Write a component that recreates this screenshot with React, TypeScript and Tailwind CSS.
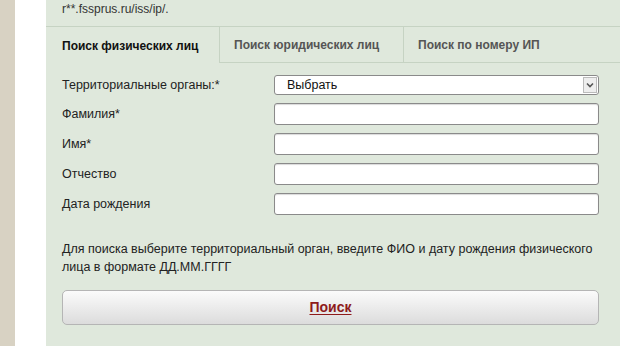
import React from "react";

function Input() {
  return (
    <div className="h-[22px] w-[325px] rounded-[3px] border border-[#8a8a8a] bg-white shadow-[inset_0_1px_1px_rgba(0,0,0,0.15)]" />
  );
}

export default function App() {
  const rows = ["Фамилия*", "Имя*", "Отчество", "Дата рождения"];
  return (
    <div className="flex h-[346px] w-[640px] overflow-hidden bg-white font-['Liberation_Sans',Arial,sans-serif] text-[#222]">
      <div className="w-[15px] shrink-0 bg-[#d8d2c3]" />
      <div className="w-[31px] shrink-0" />
      <div className="flex w-[574px] shrink-0 flex-col bg-[#dfe8dc]">
        <div className="h-[26px] pl-[16px] pt-[2px] text-[12px] leading-[14px] text-[#333]">r**.fssprus.ru/iss/ip/.</div>
        <div className="flex h-[37px] border-t border-[#c6d3c3] text-[12px] font-bold">
          <div className="flex w-[173px] items-center pl-[16px] pt-[1px] text-[#111]">Поиск физических лиц</div>
          <div className="flex w-[184px] items-center border-b border-l border-[#c6d3c3] pl-[14px] pt-[1px] text-[#555]">Поиск юридических лиц</div>
          <div className="flex flex-1 items-center border-b border-l border-[#c6d3c3] pl-[14px] pt-[1px] text-[#555]">Поиск по номеру ИП</div>
        </div>
        <div className="flex flex-col gap-[8px] pl-[16px] pt-[12px] text-[12.5px]">
          <div className="flex h-[20px] items-center">
            <div className="w-[212px]">Территориальные органы:*</div>
            <div className="flex h-[20px] w-[325px] items-center rounded-[3px] border border-[#8a8a8a] bg-white">
              <div className="flex-1 pl-[12px] text-[12.5px] text-[#111]">Выбрать</div>
              <div className="mr-[1px] flex h-[16px] w-[14px] items-center justify-center border border-[#bbb] bg-[#eee]">
                <svg width="8" height="6" viewBox="0 0 8 6">
                  <path d="M1 1.5 L4 4.5 L7 1.5" fill="none" stroke="#555" strokeWidth="1.6" />
                </svg>
              </div>
            </div>
          </div>
          {rows.map((r) => (
            <div key={r} className="flex h-[22px] items-center">
              <div className="w-[212px]">{r}</div>
              <Input />
            </div>
          ))}
        </div>
        <div className="pl-[16px] pr-[6px] pt-[25px] text-[12.5px]/[18px] text-[#222]">
          Для поиска выберите территориальный орган, введите ФИО и дату рождения физического лица в формате ДД.ММ.ГГГГ
        </div>
        <div className="ml-[16px] mt-[14px] flex h-[35px] w-[537px] items-center justify-center rounded-[5px] border border-[#b5b5b5] bg-gradient-to-b from-[#fbfbfb] to-[#dcdcdc]">
          <span className="text-[14px] font-bold text-[#8e1b1b] underline underline-offset-2">Поиск</span>
        </div>
      </div>
    </div>
  );
}
